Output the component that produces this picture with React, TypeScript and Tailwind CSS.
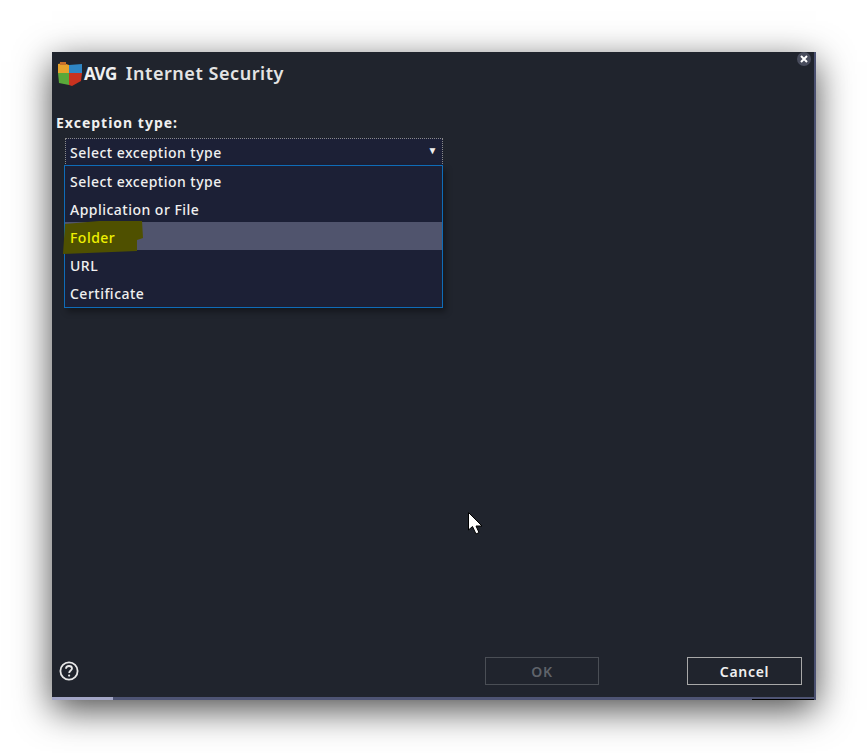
const font = { fontFamily: '"Noto Sans", sans-serif' };

const options = ["Select exception type", "Application or File", "Folder", "URL", "Certificate"];

function Logo() {
  return (
    <svg width="26" height="26" viewBox="0 0 26 26" className="shrink-0">
      <path d="M1 3 L6 2 L12 4 L12 12 L1 12 Z" fill="#e8a32c" />
      <path d="M3 1 L9 1 L9 4 L3 4 Z" fill="#c9702a" />
      <path d="M12 4 L25 3 L25 12 L12 12 Z" fill="#2f86c4" />
      <path d="M1 12 L12 12 L12 24 L2 22 Z" fill="#5aa83a" />
      <path d="M12 12 L25 12 L24 20 L15 25 L12 24 Z" fill="#c8321f" />
    </svg>
  );
}

function Cursor() {
  return (
    <svg width="17" height="25" viewBox="0 0 17 25" className="absolute left-[467px] top-[511px]">
      <path d="M1.5 1.5 L1.5 19 L5.5 15.5 L9 23 L12 21.5 L9 15 L15 15 Z" fill="#fff" stroke="#000" strokeWidth="1" />
    </svg>
  );
}

export default function App() {
  return (
    <div className="relative w-[868px] h-[753px] bg-white overflow-hidden" style={font}>
      <div className="absolute left-[52px] top-[52px] w-[764px] h-[648px] bg-[#20242d] text-[#f0f0f0] border-r-2 border-[#4a5070] shadow-[0_10px_34px_rgba(0,0,0,0.7)] flex flex-col">
        <div className="flex items-center h-[42px] pl-[5px] pt-[1px]">
          <Logo />
          <span className="ml-[1px] text-[17px] font-bold tracking-[-0.5px]">AVG</span>
          <span className="ml-[9px] text-[18px] font-semibold text-[#e4e4e4] tracking-[0.55px]">Internet Security</span>
        </div>

        <div className="pl-[4px] mt-[19px] text-[14px] font-bold leading-[20px] tracking-[1px]">Exception type:</div>

        <div className="relative ml-[13px] mt-[5px] w-[378px] tracking-[0.48px] font-medium">
          <div className="h-[28px] bg-[#1c2036] border border-dotted border-[#8a8a8a] flex items-center justify-between pl-[4px] pr-[4px] text-[14px]">
            <span>Select exception type</span>
            <span className="text-[10px] leading-none mb-[4px]">▼</span>
          </div>
          <div className="absolute left-[-1px] top-[27px] w-[379px] h-[143px] bg-[#1c2036] border border-[#0f6cb8] shadow-[3px_4px_6px_rgba(0,0,0,0.35)]">
            {options.map((o) => (
              <div
                key={o}
                className={
                  o === "Folder"
                    ? "relative h-[28px] flex items-center pl-[5px] pt-[2px] text-[14px] bg-[#50546d] text-[#f0f000]"
                    : "h-[28px] flex items-center pl-[5px] pt-[2px] text-[14px]"
                }
              >
                {o === "Folder" && (
                  <svg width="82" height="36" viewBox="0 0 82 36" className="absolute left-[-2px] top-[-2px]">
                    <path d="M2 4 L36 1 L79 1 L80 18 L74 20 L74 31 L0 34 Z" fill="#4f5000" />
                  </svg>
                )}
                <span className="relative">{o}</span>
              </div>
            ))}
          </div>
        </div>

        <div className="flex-1" />

        <div className="flex items-center h-[28px] mb-[15px] pl-[7px] pr-[12px]">
          <svg width="20" height="20" viewBox="0 0 20 20" className="shrink-0">
            <circle cx="10" cy="10" r="8.6" fill="none" stroke="#e8e8e8" strokeWidth="1.8" />
            <path d="M7 7.8 C7 5.8 8.4 5 10 5 C11.8 5 13 6 13 7.5 C13 9.4 10.2 9.6 10.2 12" fill="none" stroke="#e8e8e8" strokeWidth="1.8" />
            <circle cx="10.1" cy="14.6" r="1.1" fill="#e8e8e8" />
          </svg>
          <div className="flex-1" />
          <button className="w-[114px] h-[28px] border border-[#4a4e55] text-[#5f636a] text-[14px] font-semibold tracking-[0.6px]">OK</button>
          <button className="ml-[88px] w-[115px] h-[28px] border border-[#a8a8a8] text-[14px] font-semibold tracking-[0.7px]">Cancel</button>
        </div>

        <div className="absolute left-0 bottom-0 w-full h-[3px] flex">
          <div className="w-[61px] bg-[#a3a6c6]" />
          <div className="w-[639px] bg-[#4e5474]" />
          <div className="flex-1 bg-[#4e5474] border-b border-black" />
        </div>

        <div className="absolute right-[3px] top-[0px] w-[14px] h-[14px] rounded-full bg-[#484c5c] flex items-center justify-center">
          <svg width="8" height="8" viewBox="0 0 8 8">
            <path d="M1 1 L7 7 M7 1 L1 7" stroke="#fff" strokeWidth="2" />
          </svg>
        </div>
      </div>
      <Cursor />
    </div>
  );
}
